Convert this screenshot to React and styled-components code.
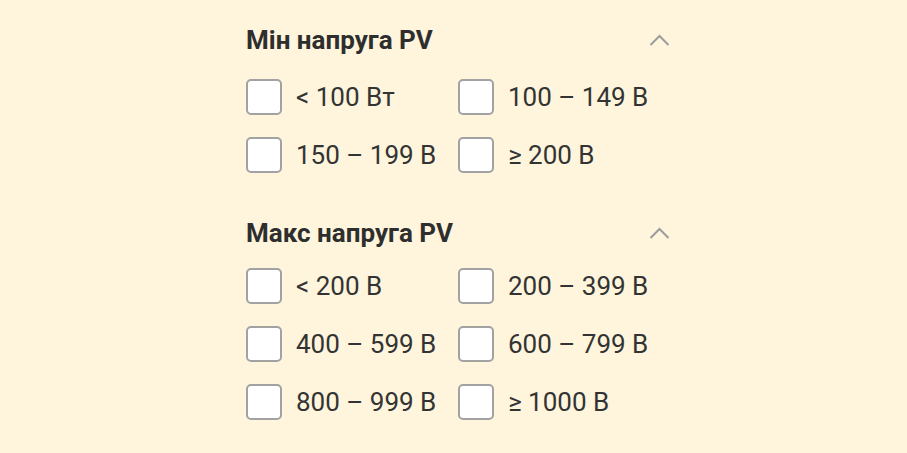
import React, { useState } from 'react';
import styled, { createGlobalStyle } from 'styled-components';

const GlobalStyle = createGlobalStyle`
  html, body {
    margin: 0;
    padding: 0;
    background: #fef5dc;
  }
  body {
    font-family: Roboto, "Liberation Sans", Arial, sans-serif;
    color: #333;
  }
`;

const Page = styled.div`
  min-height: 453px;
  padding: 25px 0 0 246px;
  box-sizing: border-box;
`;

const Panel = styled.div`
  width: 424px;
  display: flex;
  flex-direction: column;
  gap: 45px;
`;

const Section = styled.section`
  display: flex;
  flex-direction: column;
  gap: ${({ first }) => (first ? '24px' : '20px')};
`;

const SectionHead = styled.div`
  display: flex;
  justify-content: space-between;
  align-items: center;
  height: 30px;
  cursor: pointer;
`;

const Title = styled.h3`
  margin: 0;
  font-size: 26px;
  line-height: 30px;
  font-weight: 700;
  color: #2e2e2e;
`;

const Chevron = styled.svg`
  width: 21px;
  height: 12px;
  transform: ${({ closed }) => (closed ? 'rotate(180deg)' : 'none')};
`;

const Options = styled.div`
  display: grid;
  grid-template-columns: 212px 1fr;
  row-gap: 22px;
`;

const Option = styled.label`
  display: flex;
  align-items: center;
  gap: 14px;
  height: 36px;
  cursor: pointer;
  font-size: 26px;
  color: #333;
  white-space: nowrap;
`;

const Box = styled.span`
  width: 36px;
  height: 36px;
  box-sizing: border-box;
  border: 2px solid #a2a2a2;
  border-radius: 5px;
  background: ${({ checked }) => (checked ? '#f5a623' : '#fff')};
  flex-shrink: 0;
`;

const sections = [
  {
    title: 'Мін напруга PV',
    options: ['< 100 Вт', '100 – 149 В', '150 – 199 В', '≥ 200 В'],
  },
  {
    title: 'Макс напруга PV',
    options: [
      '< 200 В',
      '200 – 399 В',
      '400 – 599 В',
      '600 – 799 В',
      '800 – 999 В',
      '≥ 1000 В',
    ],
  },
];

const FilterSection = ({ title, options, first }) => {
  const [open, setOpen] = useState(true);
  const [checked, setChecked] = useState({});

  return (
    <Section first={first}>
      <SectionHead onClick={() => setOpen((v) => !v)}>
        <Title>{title}</Title>
        <Chevron viewBox="0 0 21 12" closed={!open}>
          <path d="M1.5 11 L10.5 2 L19.5 11" fill="none" stroke="#9c9c9c" strokeWidth="2" />
        </Chevron>
      </SectionHead>
      {open && (
        <Options>
          {options.map((opt) => (
            <Option
              key={opt}
              onClick={() => setChecked((c) => ({ ...c, [opt]: !c[opt] }))}
            >
              <Box checked={checked[opt]} />
              {opt}
            </Option>
          ))}
        </Options>
      )}
    </Section>
  );
};

const App = () => (
  <>
    <GlobalStyle />
    <Page>
      <Panel>
        {sections.map((s, i) => (
          <FilterSection key={s.title} first={i === 0} {...s} />
        ))}
      </Panel>
    </Page>
  </>
);

export default App;
